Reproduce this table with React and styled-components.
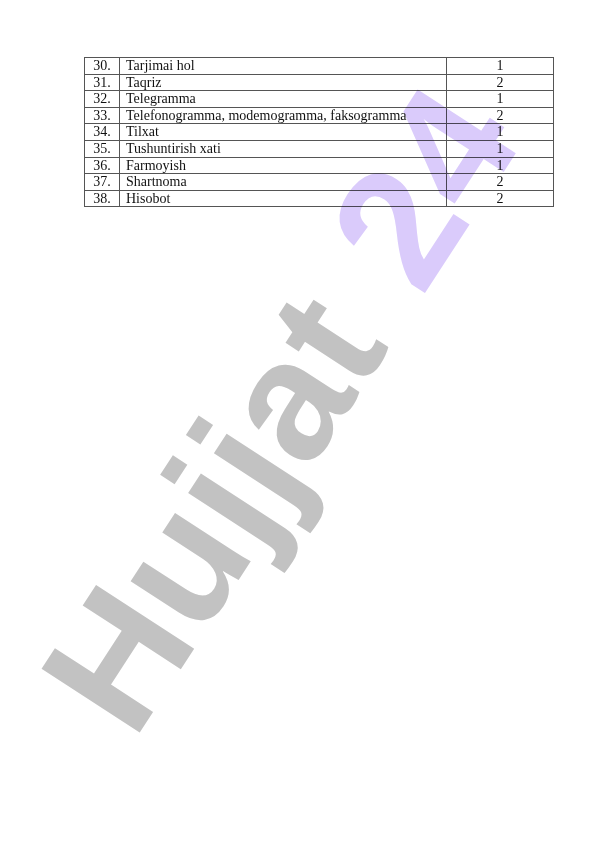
import React from 'react';
import styled, { createGlobalStyle } from 'styled-components';

const GlobalStyle = createGlobalStyle`
  html, body {
    margin: 0;
    padding: 0;
    background: #fff;
  }
`;

const Page = styled.div`
  position: relative;
  width: 596px;
  height: 842px;
  box-sizing: border-box;
  padding: 57px 0 0 84px;
  background: #fff;
  overflow: hidden;
`;

const Table = styled.table`
  width: 469px;
  border-collapse: collapse;
  table-layout: fixed;
  font-family: "Liberation Serif", "Times New Roman", serif;
  font-size: 14px;
  color: #111;
`;

const Cell = styled.td`
  height: 15.6px;
  padding: 0 0 0 ${p => (p.$align === 'left' ? '6px' : '0')};
  border: 1px solid #555;
  line-height: 15.6px;
  text-align: ${p => p.$align || 'center'};
  white-space: nowrap;
  overflow: hidden;
`;

// watermark lies over the whole page, multiplied so the table stays dark
const Watermark = styled.svg`
  position: absolute;
  left: 0;
  top: 0;
  width: 596px;
  height: 842px;
  pointer-events: none;
  mix-blend-mode: multiply;
`;

const Mark = styled.text`
  font-family: "Liberation Sans", Arial, sans-serif;
  font-weight: 700;
  font-size: 170px;
`;

const rows = [
  [30, 'Tarjimai hol', 1],
  [31, 'Taqriz', 2],
  [32, 'Telegramma', 1],
  [33, 'Telefonogramma, modemogramma, faksogramma', 2],
  [34, 'Tilxat', 1],
  [35, 'Tushuntirish xati', 1],
  [36, 'Farmoyish', 1],
  [37, 'Shartnoma', 2],
  [38, 'Hisobot', 2],
];

const App = () => (
  <>
    <GlobalStyle />
    <Page>
      <Table>
        <colgroup>
          <col style={{ width: 35 }} />
          <col style={{ width: 327 }} />
          <col style={{ width: 107 }} />
        </colgroup>
        <tbody>
          {rows.map(([n, name, count]) => (
            <tr key={n}>
              <Cell>{n}.</Cell>
              <Cell $align="left">{name}</Cell>
              <Cell>{count}</Cell>
            </tr>
          ))}
        </tbody>
      </Table>
      <Watermark viewBox="0 0 596 842">
        <Mark x="133.5" y="742" transform="rotate(-57 133.5 742)">
          <tspan fill="#c2c2c2">Hujjat </tspan>
          <tspan fill="#dacbfb" dx="10">24</tspan>
        </Mark>
      </Watermark>
    </Page>
  </>
);

export default App;
